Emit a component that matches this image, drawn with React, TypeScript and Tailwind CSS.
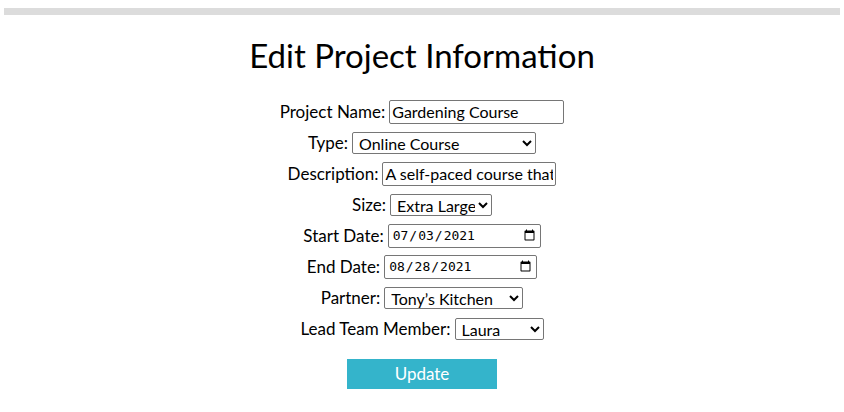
import React from "react";

const inputCls =
  "border border-[#767676] rounded-[2px] bg-white text-black px-[2px] h-[24px] text-[16px]";
const selectCls =
  "border border-[#767676] rounded-[2px] bg-white text-black h-[22px] text-[16px] leading-[18px] pl-[2px] py-0";
const dateCls =
  "border border-[#767676] rounded-[2px] bg-white text-black h-[24px] text-[13px] pl-[3px] pr-[2px] font-['DejaVu_Sans_Mono',monospace]";

function Row({ label, children }: { label: string; children: React.ReactNode }) {
  return (
    <div className="flex items-center justify-center h-[31px] gap-[4px]">
      <span>{label}</span>
      {children}
    </div>
  );
}

export default function App() {
  return (
    <div className="min-h-[412px] bg-white text-black font-['Lato','Noto_Sans',sans-serif] text-[17px]">
      <div className="mx-[4px] pt-[8px]">
        <div className="h-[7px] bg-[#dcdcdc]" />
      </div>
      <h1 className="text-center text-[33px] leading-[40px] mt-[20px] mb-[21px] font-normal">
        Edit Project Information
      </h1>
      <form className="flex flex-col" onSubmit={(e) => e.preventDefault()}>
        <Row label="Project Name:">
          <input className={`${inputCls} w-[175px]`} defaultValue="Gardening Course" />
        </Row>
        <Row label="Type:">
          <select className={`${selectCls} w-[184px]`} defaultValue="Online Course">
            <option>Online Course</option>
            <option>Workshop</option>
          </select>
        </Row>
        <Row label="Description:">
          <input
            className={`${inputCls} w-[174px]`}
            defaultValue="A self-paced course that teaches gardening"
          />
        </Row>
        <Row label="Size:">
          <select className={`${selectCls} w-[102px]`} defaultValue="Extra Large">
            <option>Small</option>
            <option>Medium</option>
            <option>Large</option>
            <option>Extra Large</option>
          </select>
        </Row>
        <Row label="Start Date:">
          <input type="date" className={`${dateCls} w-[153px]`} defaultValue="2021-07-03" />
        </Row>
        <Row label="End Date:">
          <input type="date" className={`${dateCls} w-[153px]`} defaultValue="2021-08-28" />
        </Row>
        <Row label="Partner:">
          <select className={`${selectCls} w-[139px]`} defaultValue="tk">
            <option value="tk">Tony’s Kitchen</option>
            <option value="other">Other</option>
          </select>
        </Row>
        <Row label="Lead Team Member:">
          <select className={`${selectCls} w-[89px]`} defaultValue="Laura">
            <option>Laura</option>
            <option>Sam</option>
          </select>
        </Row>
        <div className="flex justify-center mt-[15px]">
          <button
            type="submit"
            className="w-[150px] h-[30px] bg-[#34b4cb] text-white text-[17px]"
          >
            Update
          </button>
        </div>
      </form>
    </div>
  );
}
